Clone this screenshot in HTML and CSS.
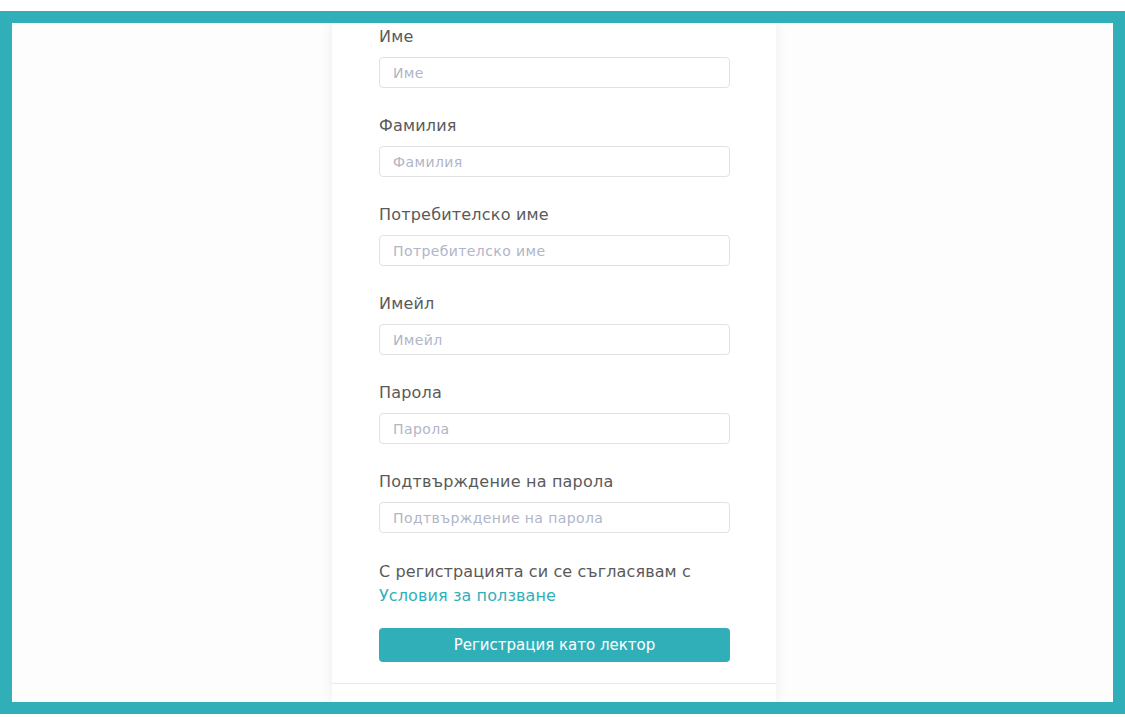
FILE: index.html
```html
<!DOCTYPE html>
<html lang="bg">
<head>
<meta charset="utf-8">
<title>Регистрация като лектор</title>
<link rel="stylesheet" href="styles.css">
</head>
<body>
<div class="frame">
  <div class="stage">
    <div class="card">
      <form class="form">
        <div class="field">
          <label class="label">Име</label>
          <input class="input" type="text" placeholder="Име">
        </div>
        <div class="field">
          <label class="label">Фамилия</label>
          <input class="input" type="text" placeholder="Фамилия">
        </div>
        <div class="field">
          <label class="label">Потребителско име</label>
          <input class="input" type="text" placeholder="Потребителско име">
        </div>
        <div class="field">
          <label class="label">Имейл</label>
          <input class="input" type="text" placeholder="Имейл">
        </div>
        <div class="field">
          <label class="label">Парола</label>
          <input class="input" type="password" placeholder="Парола">
        </div>
        <div class="field">
          <label class="label">Подтвърждение на парола</label>
          <input class="input" type="password" placeholder="Подтвърждение на парола">
        </div>
        <p class="terms">С регистрацията си се съгласявам с <a class="link" href="#">Условия за ползване</a></p>
        <button class="button" type="button">Регистрация като лектор</button>
      </form>
      <div class="card-footer"></div>
    </div>
  </div>
</div>
</body>
</html>
```

FILE: styles.css
```css
html, body {
  margin: 0;
  padding: 0;
  background: #ffffff;
}

body {
  font-family: "DejaVu Sans", "Inter", sans-serif;
  color: #5a5a5a;
}

.frame {
  margin-top: 11px;
  border: 12px solid #31afb9;
  height: 679px;
  background: #fdfdfd;
  overflow: hidden;
}

.stage {
  display: flex;
  justify-content: center;
  height: 100%;
  padding-right: 17px;
}

.card {
  width: 444px;
  background: #ffffff;
  box-shadow: 0 0 12px rgba(0, 0, 0, 0.07);
  display: flex;
  flex-direction: column;
}

.form {
  display: flex;
  flex-direction: column;
  padding: 1px 46px 21px 47px;
  border-bottom: 1px solid #e7e7ef;
}

.field {
  display: flex;
  flex-direction: column;
  gap: 8px;
  margin-bottom: 25px;
}

.field:nth-last-of-type(1) {
  margin-bottom: 27px;
}

.label {
  padding-top: 1px;
  font-size: 16px;
  line-height: 24px;
  letter-spacing: 0.2px;
  color: #5a5a5a;
}

.input {
  box-sizing: border-box;
  height: 31px;
  width: 100%;
  border: 1px solid #e2e2e6;
  border-radius: 4px;
  padding: 0 13px;
  font-family: inherit;
  font-size: 14px;
  letter-spacing: 0.4px;
  color: #5a5a5a;
  background: #ffffff;
  outline: none;
}

.input::placeholder {
  color: #b1b5c8;
}

.terms {
  margin: 0 0 20px;
  font-size: 16px;
  line-height: 24px;
  letter-spacing: 0.1px;
  color: #5a5a5a;
}

.link {
  color: #31afb9;
  text-decoration: none;
}

.button {
  height: 34px;
  border: none;
  border-radius: 4px;
  background: #31afb9;
  color: #ffffff;
  font-family: inherit;
  font-size: 15px;
  cursor: pointer;
}

.card-footer {
  flex: 1;
  background: #ffffff;
}
```
